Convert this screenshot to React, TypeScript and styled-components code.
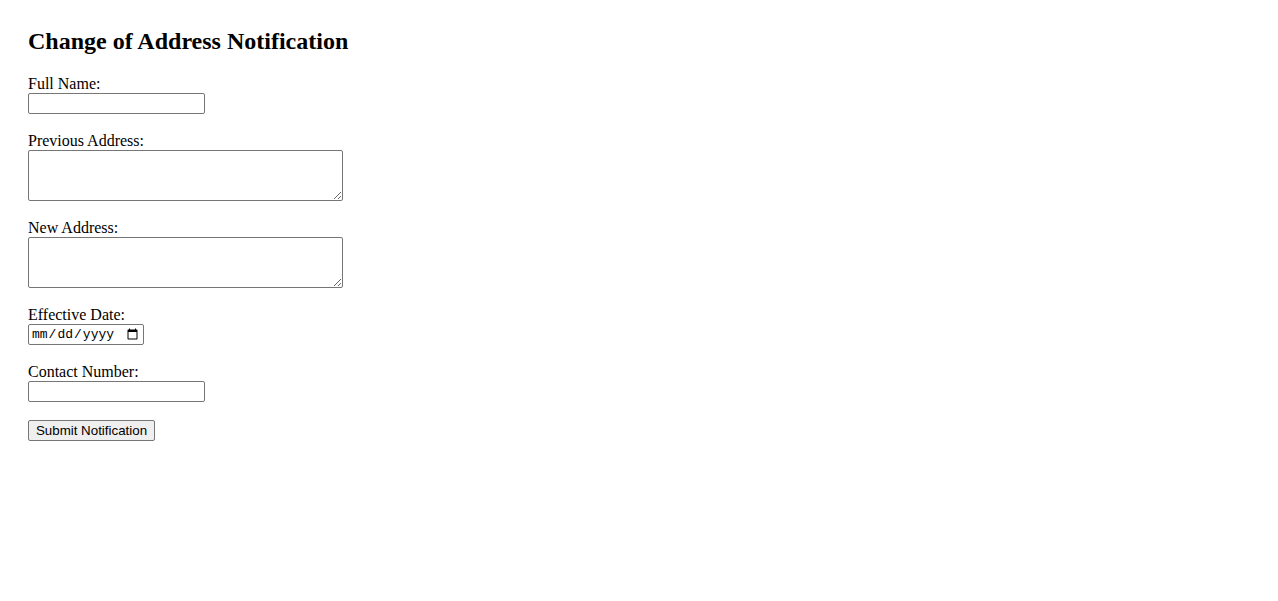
import React from "react";
import styled, { createGlobalStyle } from "styled-components";

const GlobalStyle = createGlobalStyle`
  body {
    margin: 0;
    background: #ffffff;
    font-family: "Liberation Serif", "Times New Roman", serif;
    color: #000000;
  }
`;

const Page = styled.div`
  padding: 28px;
`;

const Title = styled.h2`
  margin: 0 0 20px 0;
  font-size: 24px;
  font-weight: 700;
  line-height: 26.6px;
`;

const Form = styled.form`
  display: flex;
  flex-direction: column;
  align-items: flex-start;
  gap: 18px;
`;

const Field = styled.div`
  display: flex;
  flex-direction: column;
  align-items: flex-start;
`;

const Label = styled.label`
  font-size: 16px;
  line-height: 18px;
`;

const fieldBase = `
  box-sizing: border-box;
  margin: 0;
  border: 1px solid #767676;
  border-radius: 2px;
  background: #ffffff;
  font-family: "Liberation Sans", Arial, sans-serif;
  font-size: 13.33px;
`;

const TextInput = styled.input`
  ${fieldBase}
  width: 177px;
  height: 21px;
  padding: 1px 2px;
`;

const DateInput = styled.input`
  ${fieldBase}
  width: 116px;
  height: 21px;
  padding: 1px 2px;
  font-family: "Liberation Mono", "DejaVu Sans Mono", monospace;
  font-size: 13px;
`;

const TextArea = styled.textarea`
  ${fieldBase}
  width: 315px;
  height: 51px;
  padding: 2px;
  resize: both;
`;

const Button = styled.button`
  box-sizing: border-box;
  width: 127px;
  height: 21px;
  padding: 1px 6px;
  border: 1px solid #767676;
  border-radius: 2px;
  background: #efefef;
  color: #000000;
  font-family: "Liberation Sans", Arial, sans-serif;
  font-size: 13.33px;
`;

const fields: { id: string; label: string; kind: "text" | "area" | "date" | "tel" }[] = [
  { id: "fullName", label: "Full Name:", kind: "text" },
  { id: "previousAddress", label: "Previous Address:", kind: "area" },
  { id: "newAddress", label: "New Address:", kind: "area" },
  { id: "effectiveDate", label: "Effective Date:", kind: "date" },
  { id: "contactNumber", label: "Contact Number:", kind: "tel" },
];

const App: React.FC = () => {
  return (
    <>
      <GlobalStyle />
      <Page>
        <Title>Change of Address Notification</Title>
        <Form onSubmit={(e) => e.preventDefault()}>
          {fields.map((f) => (
            <Field key={f.id}>
              <Label htmlFor={f.id}>{f.label}</Label>
              {f.kind === "area" && <TextArea id={f.id} />}
              {f.kind === "date" && <DateInput id={f.id} type="date" />}
              {(f.kind === "text" || f.kind === "tel") && (
                <TextInput id={f.id} type={f.kind} />
              )}
            </Field>
          ))}
          <Button type="submit">Submit Notification</Button>
        </Form>
      </Page>
    </>
  );
};

export default App;
